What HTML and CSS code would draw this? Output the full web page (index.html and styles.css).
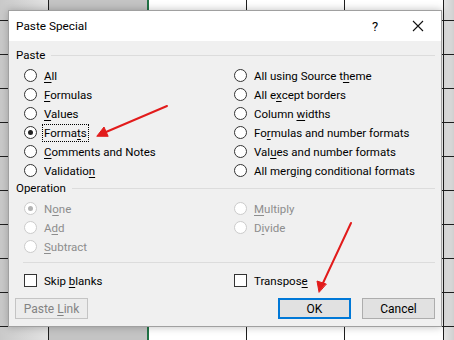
FILE: index.html
```html
<!DOCTYPE html>
<html lang="en">
<head>
    <meta charset="UTF-8">
    <title>Paste Special</title>
    <link rel="stylesheet" href="styles.css">
</head>
<body>
    <div class="sheet">
        <div class="dialog">
            <div class="titlebar">
                <span class="title">Paste Special</span>
                <span class="help">?</span>
                <svg class="close" width="12" height="12" viewBox="0 0 12 12">
                    <path d="M1 1 L11 11 M11 1 L1 11" stroke="#111" stroke-width="1.1" fill="none"/>
                </svg>
            </div>
            <div class="body">
                <div class="group-label"><span>Paste</span></div>
                <div class="options">
                    <div class="opt"><span class="radio"></span><span><u>A</u>ll</span></div>
                    <div class="opt"><span class="radio"></span><span>All using Source t<u>h</u>eme</span></div>
                    <div class="opt"><span class="radio"></span><span><u>F</u>ormulas</span></div>
                    <div class="opt"><span class="radio"></span><span>All e<u>x</u>cept borders</span></div>
                    <div class="opt"><span class="radio"></span><span><u>V</u>alues</span></div>
                    <div class="opt"><span class="radio"></span><span>Column <u>w</u>idths</span></div>
                    <div class="opt"><span class="radio checked"></span><span class="focus">Forma<u>t</u>s</span></div>
                    <div class="opt"><span class="radio"></span><span>Fo<u>r</u>mulas and number formats</span></div>
                    <div class="opt"><span class="radio"></span><span><u>C</u>omments and Notes</span></div>
                    <div class="opt"><span class="radio"></span><span>Val<u>u</u>es and number formats</span></div>
                    <div class="opt"><span class="radio"></span><span>Validatio<u>n</u></span></div>
                    <div class="opt"><span class="radio"></span><span>All mer<u>g</u>ing conditional formats</span></div>
                </div>

                <div class="group-label"><span>Operation</span></div>
                <div class="options disabled">
                    <div class="opt"><span class="radio checked"></span><span>N<u>o</u>ne</span></div>
                    <div class="opt"><span class="radio"></span><span><u>M</u>ultiply</span></div>
                    <div class="opt"><span class="radio"></span><span>A<u>d</u>d</span></div>
                    <div class="opt"><span class="radio"></span><span>D<u>i</u>vide</span></div>
                    <div class="opt"><span class="radio"></span><span><u>S</u>ubtract</span></div>
                    <div class="opt"></div>
                </div>

                <div class="separator"></div>

                <div class="options checks">
                    <div class="opt"><span class="checkbox"></span><span>Skip <u>b</u>lanks</span></div>
                    <div class="opt"><span class="checkbox"></span><span>Transpos<u>e</u></span></div>
                </div>

                <div class="buttons">
                    <button class="btn" disabled>Paste <u>L</u>ink</button>
                    <span class="spacer"></span>
                    <button class="btn default">OK</button>
                    <button class="btn">Cancel</button>
                </div>
            </div>
        </div>

        <!-- red annotation arrows -->
        <svg class="arrows" width="454" height="340" viewBox="0 0 454 340">
            <g stroke="#e21b1b" stroke-width="2" fill="#e21b1b" stroke-linecap="round">
                <line x1="167" y1="106" x2="106" y2="132"/>
                <path d="M97 136 L104 127 L108 136 Z" stroke-width="1"/>
                <line x1="351" y1="223" x2="323" y2="283"/>
                <path d="M319 292 L317 281 L326 284 Z" stroke-width="1"/>
            </g>
        </svg>
    </div>
</body>
</html>
```

FILE: styles.css
```css
body {
    margin: 0;
    font-family: Roboto, "Noto Sans", sans-serif;
    font-size: 11.5px;
    color: #000;
}
.sheet {
    position: relative;
    width: 454px;
    height: 340px;
    overflow: hidden;
    padding: 10px 0 0 8px;
    box-sizing: border-box;
    background:
        linear-gradient(to right, transparent 48px, #1e1e1e 48px, #1e1e1e 49px, transparent 49px,
            transparent 147px, #217346 147px, #217346 149px, transparent 149px,
            transparent 246px, #1e1e1e 246px, #1e1e1e 247px, transparent 247px,
            transparent 344px, #1e1e1e 344px, #1e1e1e 345px, transparent 345px,
            transparent 443px, #1e1e1e 443px, #1e1e1e 444px, transparent 444px),
        repeating-linear-gradient(to bottom, transparent 0, transparent 20px, #1e1e1e 20px, #1e1e1e 21px, transparent 21px, transparent 34px),
        linear-gradient(to right, #c9c9c9 0, #e2e2e2 48px, #c4c4c4 48px, #c4c4c4 147px, #fff 147px, #fff 444px, #e4e4e4 444px, #d0d0d0 454px);
}
.dialog {
    width: 434px;
    height: 317px;
    box-sizing: border-box;
    border: 1px solid #a0a0a0;
    background: #f0f0f0;
    box-shadow: 0 0 8px rgba(0, 0, 0, 0.25);
    display: flex;
    flex-direction: column;
}
.titlebar {
    height: 30px;
    background: #fff;
    display: flex;
    align-items: center;
    padding: 0 0 0 7px;
}
.title {
    flex: 1;
    font-size: 11.8px;
}
.help {
    font-size: 13px;
    width: 40px;
}
.close {
    margin-right: 17px;
}
.body {
    flex: 1;
    padding: 6px 6px 0 7px;
    display: flex;
    flex-direction: column;
}
.group-label {
    height: 16px;
    display: flex;
    align-items: center;
    gap: 6px;
}
.group-label::after {
    content: "";
    flex: 1;
    height: 1px;
    background: #dcdcdc;
}
.options {
    display: grid;
    grid-template-columns: 210px 1fr;
    margin: 3px 0 0 8px;
}
.opt {
    height: 19px;
    display: flex;
    align-items: center;
    gap: 7px;
}
.radio {
    width: 13px;
    height: 13px;
    box-sizing: border-box;
    border: 1px solid #333;
    border-radius: 50%;
    background: #fff;
    position: relative;
}
.radio.checked::after {
    content: "";
    position: absolute;
    left: 3px;
    top: 3px;
    width: 5px;
    height: 5px;
    border-radius: 50%;
    background: #222;
}
.disabled .opt {
    color: #8d8d8d;
}
.disabled .radio {
    border-color: #cbcbcb;
}
.disabled .radio.checked::after {
    background: #b3b3b3;
}
.focus {
    outline: 1px dotted #000;
    outline-offset: 1px;
}
u {
    text-underline-offset: 2px;
}
.separator {
    height: 1px;
    background: #dcdcdc;
    margin: 6px 0 0 7px;
}
.checks {
    margin-top: 8px;
}
.checkbox {
    width: 13px;
    height: 13px;
    box-sizing: border-box;
    border: 1px solid #333;
    background: #fff;
}
.buttons {
    display: flex;
    gap: 11px;
    margin-top: 8px;
    margin-left: -1px;
}
.spacer {
    flex: 1;
}
.btn {
    width: 73px;
    height: 21px;
    font-family: inherit;
    font-size: 12px;
    color: #000;
    background: #e1e1e1;
    border: 1px solid #adadad;
    padding: 0;
}
.btn:disabled {
    color: #838383;
    background: #ececec;
    border-color: #c4c4c4;
}
.btn.default {
    border: 2px solid #0078d7;
}
.arrows {
    position: absolute;
    left: 0;
    top: 0;
}
```
